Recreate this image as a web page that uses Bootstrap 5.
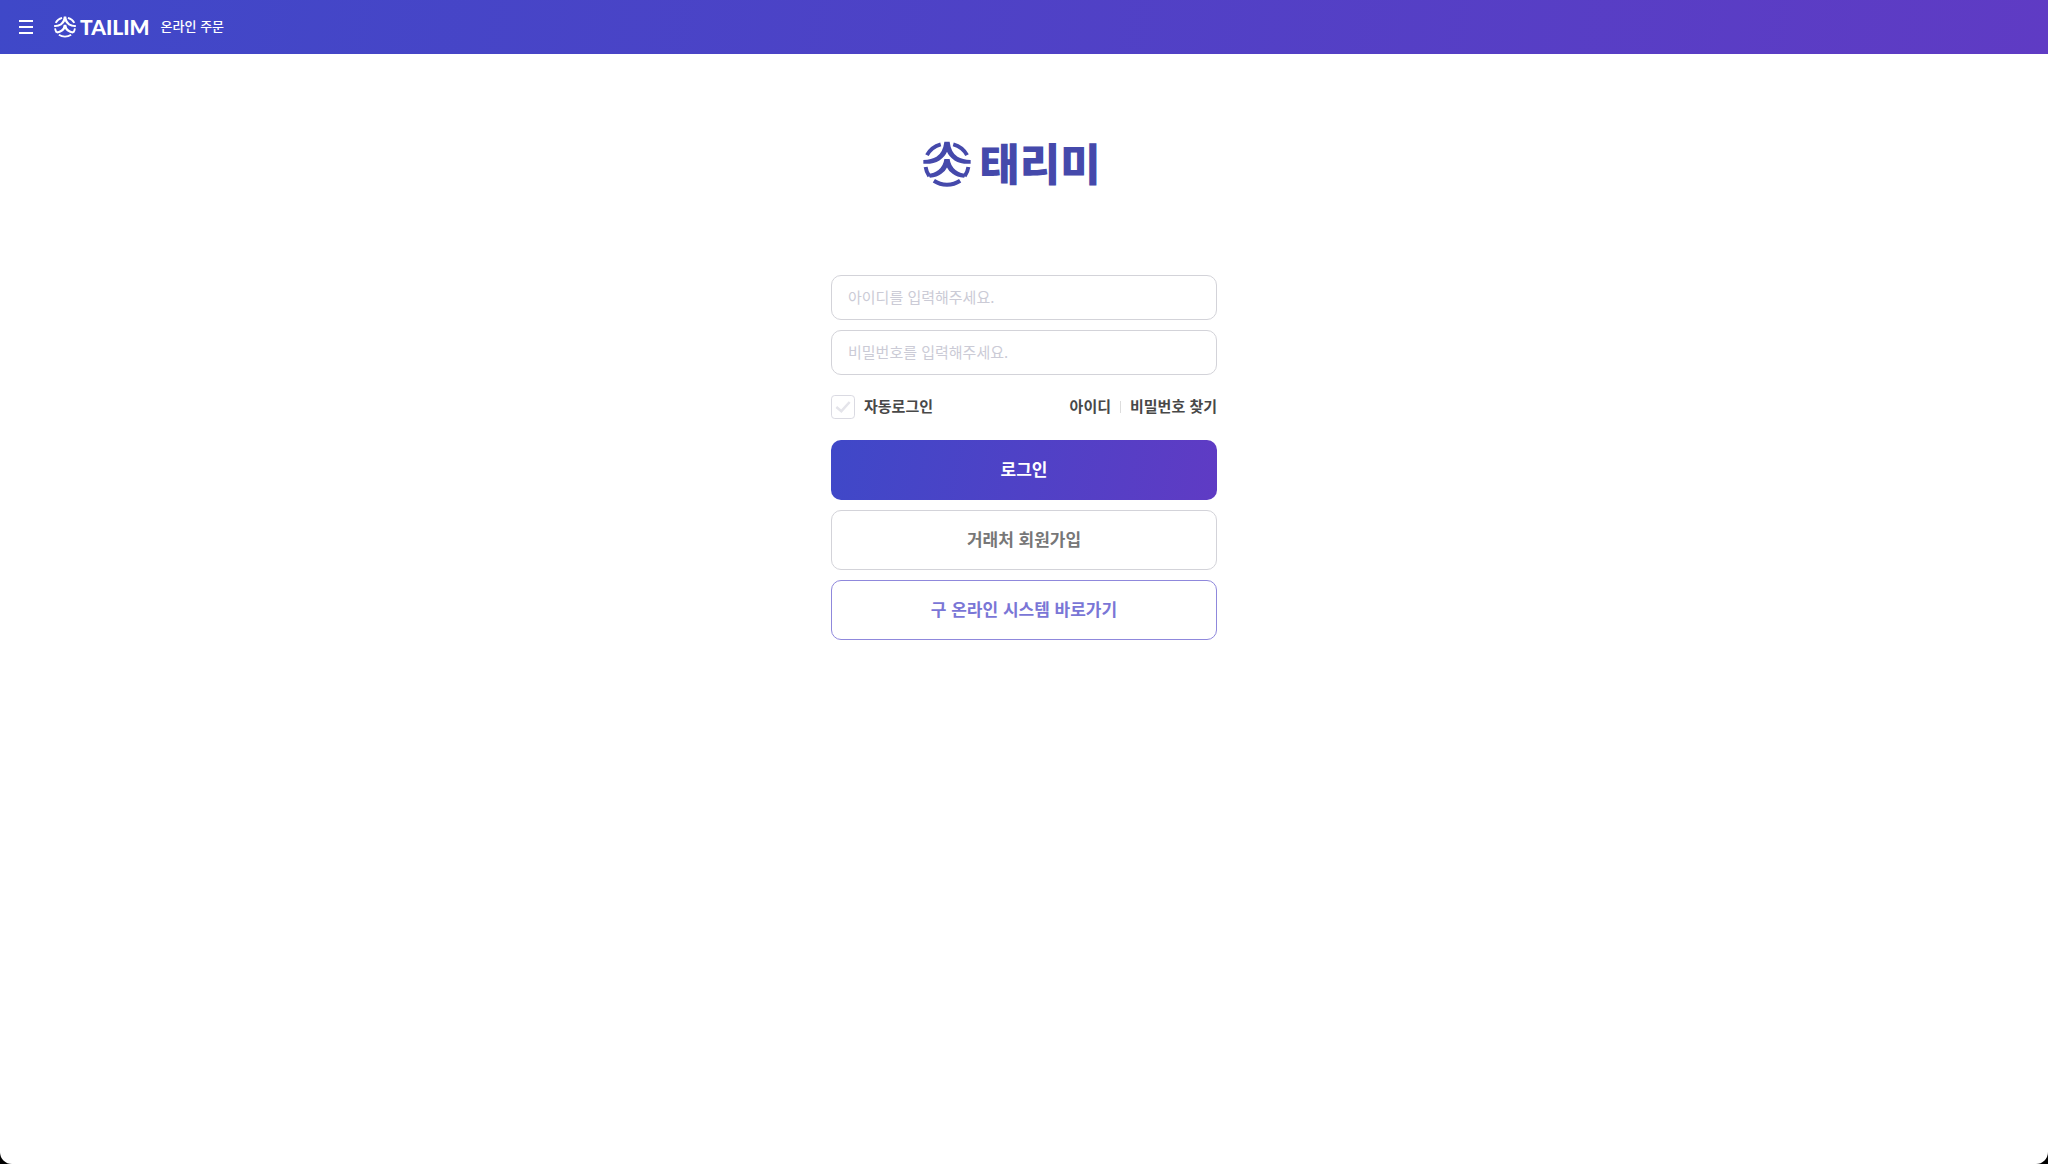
<!DOCTYPE html>
<html lang="ko">
<head>
<meta charset="utf-8">
<meta name="viewport" content="width=device-width, initial-scale=1">
<title>태리미 온라인 주문</title>
<link href="https://cdn.jsdelivr.net/npm/bootstrap@5.3.0/dist/css/bootstrap.min.css" rel="stylesheet">
<style>
  :root { --brand: #4549ab; --line: #d3d3d9; }
  html { background: #000; }
  body {
    font-family: "Noto Sans CJK KR", sans-serif;
    background: #fff;
    border-radius: 0 0 12px 12px;
    color: #444;
  }
  .brand-fill { background: linear-gradient(100deg, #3f48c8, #5f3bc4); }
  .topbar { height: 54px; padding: 0 18px; }
  .menu-btn { line-height: 0; margin-right: 20px; }
  .wordmark { font: 900 21px/24px Lato, sans-serif; }
  .service { font-size: 13px; font-weight: 500; line-height: 22px; margin-left: 11px; padding-bottom: 2px; }
  .login-box { width: 100%; max-width: 386px; padding-top: 80px; }
  .hero-logo { color: var(--brand); height: 60px; margin-bottom: 81px; padding-right: 24px; gap: 8px; }
  .hero-name { font-size: 44px; font-weight: 900; line-height: 56px; padding-bottom: 4px; }
  .field {
    height: 45px; border: 1px solid var(--line); border-radius: 10px;
    padding: 0 16px 2px; font-size: 15px;
  }
  .field::placeholder { color: #cbcbd6; }
  .stack { gap: 10px; }
  .options { font-size: 15px; font-weight: 700; line-height: 24px; margin: 19px 0 20px; }
  .options a, .options label { color: #484848; padding-bottom: 2px; }
  .options label { margin-left: 9px; }
  .auto-check {
    width: 24px; height: 24px; margin: 0; border: 1px solid #dadae2; border-radius: 4px;
    background: #fff url("data:image/svg+xml,%3Csvg xmlns='http://www.w3.org/2000/svg' viewBox='0 0 24 24'%3E%3Cpath d='M4 12l6 5 10-11' fill='none' stroke='%23e4e4ea' stroke-width='3'/%3E%3C/svg%3E") center / 20px;
  }
  .split { width: 1px; height: 12px; background: #ddd; margin: 0 9px; }
  .action { height: 60px; border-radius: 10px; font-size: 17px; font-weight: 700; padding: 0 0 2px; }
  .action-join { border-color: var(--line); color: #777; }
  .action-old { border-color: #8f88dc; color: #7a76d6; }
</style>
</head>
<body class="min-vh-100">
<svg class="d-none" xmlns="http://www.w3.org/2000/svg">
  <symbol id="emblem" viewBox="10 14 144 140">
    <g fill="none" stroke="currentColor" stroke-width="12">
      <path d="M21 57Q34 32 63 24M101 24Q130 32 143 57"/>
      <path d="M17 93Q19 108 28 121M147 93Q145 108 136 121"/>
      <path d="M42 135Q60 147 82 147Q104 147 122 135"/>
    </g>
    <g fill="currentColor">
      <path d="M74 16H90Q94 49 114 62Q129 71 154 72V83Q124 85 105 73Q88 62 82 47Q76 62 59 73Q40 85 10 83V72Q35 71 50 62Q70 49 74 16Z"/>
      <path d="M74 69H90Q93 91 108 102Q121 112 141 114L134 126Q112 124 99 114Q87 106 82 95Q77 106 65 114Q52 124 30 126L23 114Q43 112 56 102Q71 91 74 69Z"/>
    </g>
  </symbol>
</svg>

<header class="topbar brand-fill text-white d-flex align-items-center">
  <button type="button" class="menu-btn btn p-0 border-0 text-white" aria-label="메뉴">
    <svg width="16" height="16" viewBox="0 0 16 16" stroke="currentColor" stroke-width="2"><path d="M1 2h14M1 8h14M1 14h14"/></svg>
  </button>
  <a href="#" class="d-flex align-items-center text-white text-decoration-none">
    <svg class="me-1" width="22" height="22" aria-hidden="true"><use href="#emblem"/></svg>
    <span class="wordmark">TAILIM</span>
    <span class="service">온라인 주문</span>
  </a>
</header>

<main class="login-box mx-auto">
  <h1 class="hero-logo d-flex justify-content-center align-items-center">
    <svg width="48" height="46" aria-hidden="true"><use href="#emblem"/></svg>
    <span class="hero-name">태리미</span>
  </h1>
  <form>
    <div class="stack d-grid">
      <input type="text" class="field form-control" placeholder="아이디를 입력해주세요." aria-label="아이디">
      <input type="password" class="field form-control" placeholder="비밀번호를 입력해주세요." aria-label="비밀번호">
    </div>
    <div class="options d-flex align-items-center">
      <input type="checkbox" class="auto-check form-check-input" id="auto">
      <label for="auto" class="me-auto">자동로그인</label>
      <a href="#" class="text-decoration-none">아이디</a>
      <span class="split"></span>
      <a href="#" class="text-decoration-none">비밀번호 찾기</a>
    </div>
    <div class="stack d-grid">
      <button type="submit" class="action btn brand-fill border-0 text-white">로그인</button>
      <button type="button" class="action action-join btn">거래처 회원가입</button>
      <button type="button" class="action action-old btn">구 온라인 시스템 바로가기</button>
    </div>
  </form>
</main>
<script src="https://cdn.jsdelivr.net/npm/bootstrap@5.3.0/dist/js/bootstrap.bundle.min.js"></script>
</body>
</html>
